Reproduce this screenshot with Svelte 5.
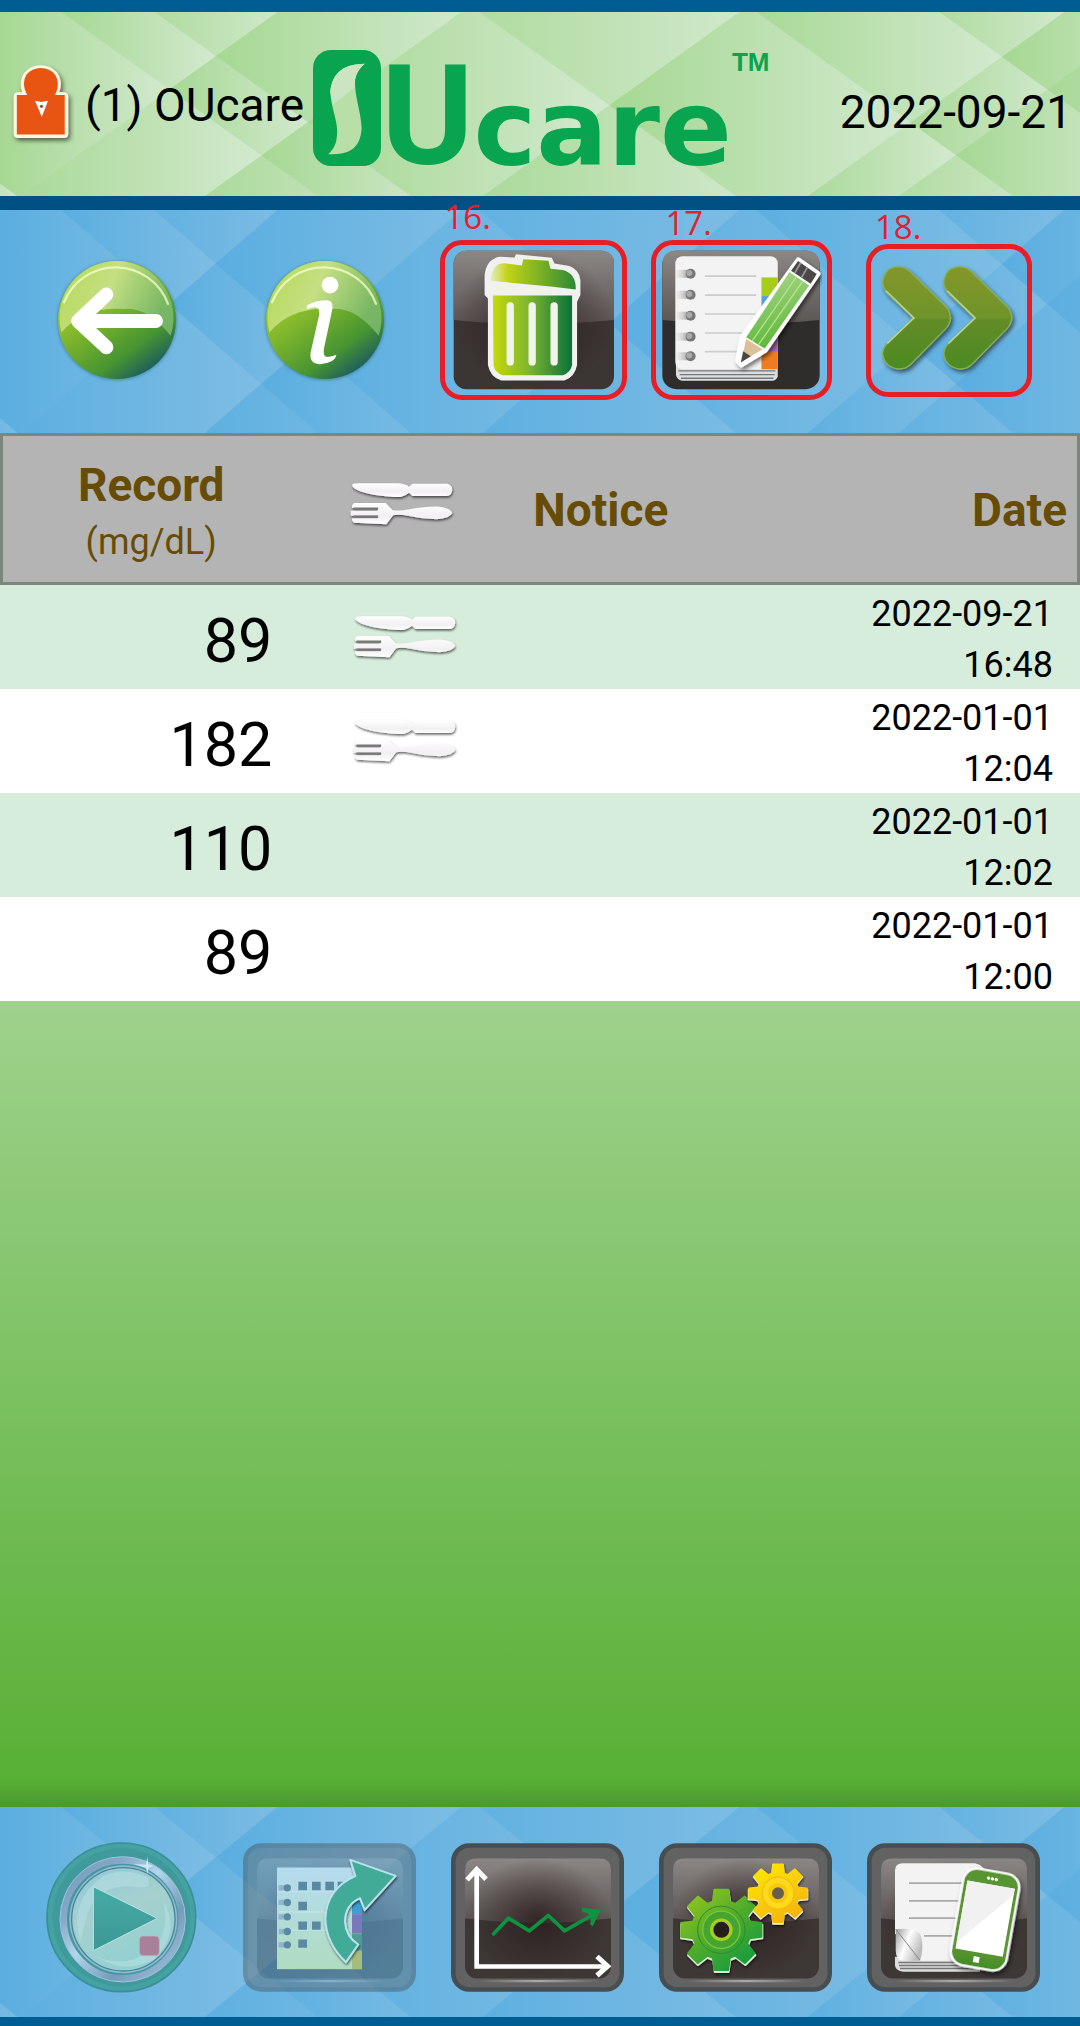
<script>
  const records = [
    { value: 89, meal: true, date: '2022-09-21', time: '16:48' },
    { value: 182, meal: true, date: '2022-01-01', time: '12:04' },
    { value: 110, meal: false, date: '2022-01-01', time: '12:02' },
    { value: 89, meal: false, date: '2022-01-01', time: '12:00' }
  ];

  // Argyle backdrop. Each facet lies between two falling lines (d1, d2) and
  // two rising lines (u1, u2), named by their x on the top edge; g1 and g2
  // are the ends of its shading.
  const slope = 2.7;
  const facets = [
    [-240, 62, -400, 278, 0, 170],
    [-240, 62, 278, 462, 0, 262],
    [-240, 62, 462, 900, 180, 420],
    [-600, -240, -200, 700, -60, 30],
    [62, 155, -200, 278, 62, 216],
    [62, 155, 278, 462, 170, 308],
    [62, 155, 462, 740, 262, 447],
    [155, 480, 0, 278, 120, 290],
    [155, 480, 278, 462, 216, 471],
    [155, 480, 462, 740, 308, 610],
    [155, 480, 740, 1065, 447, 772],
    [480, 757, 200, 740, 400, 760],
    [480, 757, 740, 1065, 610, 911],
    [480, 757, 1065, 1156, 790, 956],
    [480, 757, 1156, 1500, 850, 1060],
    [757, 940, 500, 1065, 740, 1002],
    [757, 940, 1065, 1156, 900, 1060],
    [757, 940, 1156, 1500, 956, 1150],
    [940, 1400, 700, 1065, 900, 1070],
    [940, 1400, 1065, 1156, 1002, 1200],
    [940, 1400, 1156, 1600, 1040, 1260]
  ];
  const corner = (d, u) => `${(u + d) / 2},${(u - d) / slope}`;
  const outline = ([d1, d2, u1, u2]) =>
    [corner(d1, u1), corner(d2, u1), corner(d2, u2), corner(d1, u2)].join(' ');

  function gear(cx, cy, outer, inner, teeth) {
    const pts = [];
    const step = (Math.PI * 2) / teeth;
    for (let i = 0; i < teeth; i++) {
      const a = i * step;
      for (const [r, o] of [[inner, -0.29], [outer, -0.17], [outer, 0.17], [inner, 0.29]]) {
        pts.push(`${cx + r * Math.cos(a + o)},${cy + r * Math.sin(a + o)}`);
      }
    }
    return pts.join(' ');
  }
</script>

{#snippet backdrop(id, dark, light)}
  <svg class="backdrop" viewBox="0 0 1080 190" preserveAspectRatio="none" aria-hidden="true">
    <defs>
      {#each facets as f, i}
        <linearGradient id="{id}{i}" gradientUnits="userSpaceOnUse" x1={f[4]} x2={f[5]} y1="0" y2="0">
          <stop offset="0" stop-color={dark} /><stop offset="1" stop-color={light} />
        </linearGradient>
      {/each}
    </defs>
    {#each facets as f, i}
      <polygon points={outline(f)} fill="url(#{id}{i})" stroke="url(#{id}{i})" stroke-width="1" />
    {/each}
  </svg>
{/snippet}

{#snippet cutlery()}
  <svg class="cutlery" viewBox="1012 150 312 144" preserveAspectRatio="none" role="img" aria-label="Meal">
    <g filter="url(#soft)" fill="url(#metal)">
      <path d="M1025 163Q1030 160 1045 160H1160Q1180 162 1190 170L1200 161H1300Q1316 163 1316 180Q1314 198 1298 198H1200L1190 188Q1172 203 1150 201Q1060 196 1030 175Q1022 168 1025 163Z" />
      <path d="M1030 219H1122L1142 240Q1160 244 1190 238Q1245 228 1280 230Q1314 235 1316 249Q1310 265 1270 268Q1230 268 1190 258Q1160 252 1144 256L1124 283L1030 278Q1022 274 1024 265H1098V257H1020V242H1098V234H1024Q1022 224 1030 219Z" />
      <path d="M1028 236H1100M1028 260H1100" stroke="#777" stroke-width="7" />
    </g>
  </svg>
{/snippet}

{#snippet tile(x)}
  <g transform="translate({x} 0)">
    <rect x="7" y="166" width="505" height="432" rx="48" fill="#626262" stroke="#474e51" stroke-width="14" />
    <rect x="42" y="204" width="438" height="361" rx="36" fill="#3d3736" />
    <path d="M42 384V240Q42 204 78 204H444Q480 204 480 240V384Q260 412 42 384Z" fill="url(#gloss)" />
    <rect x="42" y="204" width="438" height="361" rx="36" fill="url(#vignette)" />
    <path d="M80 573H444" stroke="url(#glint)" stroke-width="7" />
  </g>
{/snippet}

{#snippet ball(cx)}
  <circle {cx} cy="395" r="178" fill="#356b7c" opacity=".55" filter="url(#blur)" />
  <circle {cx} cy="393" r="176" fill="url(#ball)" />
  <path d="M{cx - 166} 430A170 170 0 1 1 {cx + 160} 440Q{cx + 90} 352 {cx + 20} 360Q{cx - 100} 352 {cx - 166} 430Z" fill="url(#shine)" />
  <path d="M{cx - 158} 340A166 166 0 0 1 {cx + 152} 345" fill="none" stroke="#f5ffc8" stroke-width="7" opacity=".75" stroke-linecap="round" />
{/snippet}

<svg class="defs" aria-hidden="true">
  <defs>
    <filter id="soft" x="-10%" y="-20%" width="125%" height="150%">
      <feDropShadow dx="2" dy="5" stdDeviation="3" flood-color="#000" flood-opacity=".6" />
    </filter>
    <filter id="drop" x="-20%" y="-20%" width="150%" height="150%">
      <feDropShadow dx="6" dy="8" stdDeviation="7" flood-color="#000" flood-opacity=".55" />
    </filter>
    <filter id="blur" x="-20%" y="-20%" width="140%" height="140%"><feGaussianBlur stdDeviation="5" /></filter>
    <linearGradient id="metal" x2="0" y2="1"><stop offset="0" stop-color="#fff" /><stop offset=".6" stop-color="#f2f0f2" /><stop offset="1" stop-color="#fff" /></linearGradient>
    <linearGradient id="gloss" x2="0" y2="1"><stop offset="0" stop-color="#8b8785" /><stop offset="1" stop-color="#5b5554" /></linearGradient>
    <radialGradient id="vignette"><stop offset="0" stop-color="#2a1c1b" stop-opacity=".8" /><stop offset="1" stop-color="#2a1c1b" stop-opacity="0" /></radialGradient>
    <linearGradient id="glint" gradientUnits="userSpaceOnUse" x1="80" x2="444"><stop offset="0" stop-color="#aaa" stop-opacity="0" /><stop offset=".5" stop-color="#aaa" /><stop offset="1" stop-color="#aaa" stop-opacity="0" /></linearGradient>
    <linearGradient id="ball" x1=".2" y1=".2" x2=".75" y2=".95"><stop offset="0" stop-color="#a4cd2c" /><stop offset=".35" stop-color="#7db52c" /><stop offset=".75" stop-color="#469432" /><stop offset="1" stop-color="#1d5f5c" /></linearGradient>
    <linearGradient id="shine" x2="1" y2=".3"><stop offset="0" stop-color="#b4d957" /><stop offset=".5" stop-color="#c5df82" /><stop offset="1" stop-color="#80bd72" stop-opacity=".8" /></linearGradient>
    <linearGradient id="leafy"><stop offset="0" stop-color="#c5d80c" /><stop offset=".45" stop-color="#7eb62f" /><stop offset="1" stop-color="#0a713b" /></linearGradient>
    <linearGradient id="lid"><stop offset="0" stop-color="#e6ecc0" /><stop offset=".2" stop-color="#c1d415" /><stop offset="1" stop-color="#2e8936" /></linearGradient>
    <linearGradient id="chev" x2="0" y2="1"><stop offset="0" stop-color="#84962c" /><stop offset=".5" stop-color="#6f942b" /><stop offset=".52" stop-color="#638c27" /><stop offset="1" stop-color="#4b8a23" /></linearGradient>
    <linearGradient id="wood" x1=".3" x2=".6" y2="1"><stop offset="0" stop-color="#a9d68a" /><stop offset="1" stop-color="#57b533" /></linearGradient>
    <linearGradient id="coil"><stop offset="0" stop-color="#ddd" stop-opacity=".3" /><stop offset="1" stop-color="#888" /></linearGradient>
    <linearGradient id="gearG" x2=".8" y2="1"><stop offset="0" stop-color="#9bcb1d" /><stop offset=".5" stop-color="#53ad2b" /><stop offset="1" stop-color="#139a3d" /></linearGradient>
    <linearGradient id="gearY" x2=".6" y2="1"><stop offset="0" stop-color="#ffec00" /><stop offset="1" stop-color="#f5b50f" /></linearGradient>
    <linearGradient id="silver" x2="1" y2="1"><stop offset="0" stop-color="#7199bb" /><stop offset=".25" stop-color="#88a8c8" /><stop offset=".45" stop-color="#b2d6ec" /><stop offset=".7" stop-color="#789bbb" /><stop offset="1" stop-color="#a7c6e0" /></linearGradient>
    <linearGradient id="glass" x2=".4" y2="1"><stop offset="0" stop-color="#8fc8dc" /><stop offset=".5" stop-color="#a5d0ce" /><stop offset="1" stop-color="#93d0d1" /></linearGradient>
    <linearGradient id="play" x2="0" y2="1"><stop offset="0" stop-color="#46aba5" /><stop offset="1" stop-color="#3c9794" /></linearGradient>
    <linearGradient id="sheet" x2="0" y2="1"><stop offset="0" stop-color="#b5dbf0" /><stop offset="1" stop-color="#afdcc0" /></linearGradient>
    <linearGradient id="curl" y2=".5"><stop offset="0" stop-color="#999" /><stop offset=".5" stop-color="#fff" /><stop offset="1" stop-color="#bbb" /></linearGradient>
    <linearGradient id="phone" x2="0" y2="1"><stop offset="0" stop-color="#55952f" /><stop offset=".8" stop-color="#62953a" /><stop offset="1" stop-color="#3f8e1e" /></linearGradient>
  </defs>
</svg>

<div class="app">
  <header class="banner">
    {@render backdrop('g', '#a6d893', '#d2e9ce')}
    <svg class="lock" viewBox="30 182 190 250" preserveAspectRatio="none" role="img" aria-label="Locked">
      <g filter="url(#drop)">
        <path d="M52 272H66Q54 240 72 214Q92 192 120 192Q148 192 168 214Q186 240 174 272H188Q200 274 200 284V396Q200 408 188 408H54Q41 408 41 396V284Q41 274 52 272Z" fill="#fff6e4" />
      </g>
      <path d="M50 280H80Q62 246 78 220Q94 200 120 200Q146 200 162 220Q178 246 162 280H190V398H50Z" fill="#e85512" />
      <path d="M103 297L122 301L141 297L123 346Z" fill="#fff" /><circle cx="122" cy="314" r="5" fill="#8d5a3d" />
    </svg>
    <span class="user">(1) OUcare</span>
    <div class="logo">
      <span class="mark">O<svg viewBox="909 150 197 347" preserveAspectRatio="none" aria-hidden="true"><path d="M1059 191C1000 192 965 215 959 275C962 330 985 370 978 410C975 440 963 450 953 462C1010 463 1045 450 1050 385C1048 330 1028 290 1031 235C1036 210 1048 200 1059 191Z" fill="#b9dfa8" /><path d="M1059 191C1000 192 965 215 959 275L968 312L1029 262C1028 225 1045 204 1059 191Z" fill="#cbe5c2" /></svg></span><span class="tall">U</span><span class="low">care</span><sup>TM</sup>
    </div>
    <time class="today">2022-09-21</time>
  </header>

  <nav class="bar tools" aria-label="Record tools">
    {@render backdrop('t', '#5aaee0', '#7ebde4')}
    <button aria-label="Back">
      <svg class="round" viewBox="165 208 370 370">
        {@render ball(350)}
        <path d="M318 317L234 396L318 474M240 396H466" fill="none" stroke="#fff" stroke-width="42" stroke-linecap="round" stroke-linejoin="round" />
      </svg>
    </button>
    <button aria-label="Information">
      <svg class="round" viewBox="789 208 370 370">
        {@render ball(974)}
        <circle cx="989" cy="289" r="25" fill="#fff" />
        <path d="M920 350Q945 334 980 334Q1000 336 996 360L971 478Q966 505 985 503Q998 502 1008 497Q1005 520 960 525Q926 524 931 490L957 376Q958 350 938 356L920 360Z" fill="#fff" />
      </svg>
    </button>
    <div class="marked first">
      <span class="number">16.</span>
      <button aria-label="Delete">
        <svg class="dark" viewBox="65 180 484 420">
          <rect x="67" y="182" width="482" height="416" rx="38" fill="#3b3534" />
          <path d="M67 390V222Q67 182 107 182H509Q549 182 549 222V390Q300 415 67 390Z" fill="url(#gloss)" />
          <rect x="67" y="182" width="482" height="416" rx="38" fill="url(#vignette)" />
          <path d="M160 300V255Q165 208 205 200L250 202L254 192L362 203L370 220L415 228Q446 240 448 270V315L438 335V525Q432 560 400 572H210Q176 560 170 525V325L160 315Z" fill="#f1f1ef" />
          <path d="M178 272Q182 215 225 220L272 226L276 207L352 212L358 236L395 240Q435 250 434 298L365 290Z" fill="url(#lid)" />
          <path d="M185 316H423V525Q418 548 395 556H215Q190 548 187 525Z" fill="url(#leafy)" />
          <path d="M237 348V516M303 348V516M369 348V516" stroke="#f1f5ea" stroke-width="22" stroke-linecap="round" />
        </svg>
      </button>
    </div>
    <div class="marked second">
      <span class="number">17.</span>
      <button aria-label="Edit note">
        <svg class="dark" viewBox="60 180 484 420">
          <rect x="64" y="182" width="473" height="416" rx="42" fill="#2f2c2c" />
          <path d="M64 390V224Q64 182 106 182H495Q537 182 537 224V390Q300 415 64 390Z" fill="url(#gloss)" />
          <path d="M105 520H411V560Q405 573 395 573H125Q108 570 105 555Z" fill="#ddd" />
          <path d="M112 543H404M116 554H402M120 565H398" stroke="#73787a" stroke-width="4" />
          <rect x="103" y="198" width="308" height="340" rx="22" fill="#f3f3f3" />
          <rect x="362" y="262" width="49" height="56" fill="#a8cc1c" /><rect x="362" y="318" width="49" height="56" fill="#5aa2d4" />
          <rect x="362" y="430" width="49" height="56" fill="#a06ab0" /><rect x="362" y="484" width="49" height="54" fill="#ee7d22" />
          <path d="M192 258H346M192 315H346M192 372H346M192 429H346M192 485H346" stroke="#ccc" stroke-width="5" />
          {#each [251, 314, 377, 440, 499] as y}
            <rect x="106" y={y - 12} width="44" height="24" fill="url(#coil)" /><circle cx="149" cy={y} r="15" fill="#777" /><circle cx="145" cy={y - 2} r="9" fill="#aaa" />
          {/each}
          <path d="M473 211L530 251L372 480L302 523L292 511L305 443Z" fill="#fff" stroke="#fff" stroke-width="18" stroke-linejoin="round" filter="url(#drop)" />
          <path d="M472 213L528 252L510 281L451 242Z" fill="#4d4848" /><path d="M480 218L462 249M500 232L482 263" stroke="#999" stroke-width="5" />
          <path d="M446 246L505 286L372 476L316 442Z" fill="url(#wood)" /><path d="M466 262L335 452M485 275L353 464" stroke="#b7e38c" stroke-width="4" />
          <path d="M316 447L366 478L302 515Z" fill="#dcc09a" /><path d="M307 484L330 499L300 518Z" fill="#4c4542" />
        </svg>
      </button>
    </div>
    <div class="marked third">
      <span class="number">18.</span>
      <button aria-label="Next">
        <svg class="next" viewBox="714 208 430 360">
          {#each [0, 184] as x}
            <path transform="translate({x} 0)" d="M742 308Q728 290 728 272Q735 228 775 228Q795 228 810 242L918 348Q946 382 918 414L812 522Q795 537 772 535Q730 525 728 487Q730 470 745 455L820 382Z" fill="url(#chev)" stroke="#86b04e" stroke-width="4" filter="url(#drop)" />
            <path transform="translate({x} 0)" d="M738 300L822 382L742 458" fill="none" stroke="#c5dda4" stroke-width="5" opacity=".8" />
          {/each}
        </svg>
      </button>
    </div>
  </nav>

  <main>
    <table>
      <thead>
        <tr>
          <th class="record"><span class="label">Record</span><span class="unit">(mg/dL)</span></th>
          <th class="meal">{@render cutlery()}</th>
          <th class="notice">Notice</th>
          <th class="date">Date</th>
        </tr>
      </thead>
      <tbody>
        {#each records as r}
          <tr>
            <td class="value">{r.value}</td>
            <td class="meal">{#if r.meal}{@render cutlery()}{/if}</td>
            <td></td>
            <td class="when"><span class="day">{r.date}</span><span class="hour">{r.time}</span></td>
          </tr>
        {/each}
      </tbody>
    </table>
  </main>

  <footer class="bar actions">
    {@render backdrop('f', '#5aaee0', '#7ebde4')}
    <button aria-label="Start measuring" disabled>
      <svg class="play" viewBox="138 156 453 453">
        <circle cx="364" cy="382" r="223" fill="#44a2a3" stroke="#398f93" stroke-width="5" />
        <circle cx="364" cy="382" r="207" fill="#409a9c" />
        <circle cx="368" cy="388" r="177" fill="none" stroke="url(#silver)" stroke-width="20" />
        <circle cx="368" cy="388" r="188" fill="none" stroke="#9dc6e2" stroke-width="3" />
        <circle cx="370" cy="388" r="162" fill="#8fb9d5" />
        <circle cx="370" cy="388" r="155" fill="url(#glass)" stroke="#498594" stroke-width="4" />
        <path d="M240 455Q205 330 310 258Q365 230 440 260Q465 300 400 290Q300 280 262 370Q245 440 240 455ZM290 500Q400 545 480 450Q505 400 490 330Q545 430 460 510Q370 555 290 500Z" fill="#b4dde1" opacity=".65" />
        <path d="M280 290L472 385L280 482Z" fill="url(#play)" stroke="#bfe2e5" stroke-width="3" />
        <rect x="418" y="438" width="60" height="59" rx="12" fill="#a97f99" stroke="#b8bcc5" stroke-width="2" />
        <path d="M442 200L445 223L460 228L446 233L442 252L438 233L400 222L438 224Z" fill="#cce7f5" />
      </svg>
    </button>
    <button class="off" aria-label="Export records" disabled>
      <svg class="tile" viewBox="729 159 519 446">
        <g opacity=".42">{@render tile(729)}</g>
        <rect x="831" y="232" width="255" height="305" fill="url(#sheet)" />
        <path d="M1056 330H1086V372H1056Z" fill="#3c9fd2" /><path d="M1056 372H1086V430H1056Z" fill="#7a78ba" /><path d="M1056 430H1086V482H1056Z" fill="#4d9e92" /><path d="M1056 482H1086V537H1056Z" fill="#a5bd7c" />
        <path d="M835 305H1050M835 365H1050M835 420H1050" stroke="#c6e2ed" stroke-width="3" />
        <g fill="#5a89a2">
          <path d="M895 275h26v25h-26zM936 275h26v25h-26zM976 275h26v25h-26zM1013 275h20v25h-20zM895 335h26v25h-26zM895 394h26v25h-26zM936 394h26v25h-26zM895 448h26v25h-26z" />
          {#each [293, 337, 380, 424, 464] as y}
            <rect x="836" y={y - 8} width="24" height="16" fill="#90b4cf" /><circle cx="862" cy={y} r="11" />
          {/each}
        </g>
        <path d="M1051 209L1187 257L1094 360L1080 324Q1035 345 1035 395Q1038 440 1075 463L1038 516Q978 460 976 385Q980 295 1066 258Z" fill="#43ab97" stroke="#b9e3ef" stroke-width="6" stroke-linejoin="round" filter="url(#soft)" />
      </svg>
    </button>
    <button aria-label="Trend chart">
      <svg class="tile" viewBox="63 159 519 446">
        {@render tile(63)}
        <path d="M140 240V529H530" fill="none" stroke="#fff" stroke-width="14" />
        <path d="M111 269L140 238L168 267M501 499L533 528L501 556" fill="none" stroke="#fff" stroke-width="15" />
        <path d="M191 431L235 384L298 422L355 376L404 422L495 370" fill="none" stroke="#0d9440" stroke-width="11" stroke-linecap="round" stroke-linejoin="round" />
        <path d="M455 353L512 359L488 409L480 402L484 382L474 370L456 364Z" fill="#0d9440" />
      </svg>
    </button>
    <button aria-label="Settings">
      <svg class="tile" viewBox="688 159 519 446">
        {@render tile(688)}
        <g filter="url(#soft)">
          <polygon points={gear(876, 424, 124, 90, 8)} fill="#d7e9d2" stroke="#d7e9d2" stroke-width="5" stroke-linejoin="round" />
          <polygon points={gear(875, 419, 122, 88, 8)} fill="url(#gearG)" stroke="url(#gearG)" stroke-width="6" stroke-linejoin="round" />
        </g>
        <circle cx="875" cy="419" r="71" fill="none" stroke="#2f8a2c" stroke-width="3" /><circle cx="875" cy="419" r="56" fill="#45a52e" stroke="#7cc53b" stroke-width="4" />
        <circle cx="875" cy="419" r="29" fill="#251e1c" stroke="#a6d01c" stroke-width="10" />
        <g filter="url(#soft)">
          <polygon points={gear(1045, 313, 90, 63, 8)} fill="#f2edd0" stroke="#f2edd0" stroke-width="4" stroke-linejoin="round" />
          <polygon points={gear(1045, 309, 88, 62, 8)} fill="url(#gearY)" stroke="url(#gearY)" stroke-width="5" stroke-linejoin="round" />
        </g>
        <circle cx="1045" cy="309" r="48" fill="#ffd91a" stroke="#f0bd18" stroke-width="4" /><circle cx="1045" cy="309" r="30" fill="#f8c80c" />
        <circle cx="1045" cy="309" r="18" fill="#6b5d4e" />
      </svg>
    </button>
    <button aria-label="Mobile report">
      <svg class="tile" viewBox="81 159 519 446">
        {@render tile(81)}
        <path d="M165 500H420V545H190Q166 540 165 525Z" fill="#ddd" /><path d="M175 517H400M177 526H400M180 535H400" stroke="#777" stroke-width="4" />
        <path d="M165 240Q166 219 188 219H405Q435 224 440 260V512H240L165 430Z" fill="#f3f3f3" />
        <path d="M207 279H370M207 332H370M207 384H370M252 437H370" stroke="#aaa" stroke-width="5" />
        <path d="M167 417Q235 410 244 440Q252 480 240 512H190Q168 512 167 480Z" fill="url(#curl)" /><path d="M167 417L240 510" stroke="#888" stroke-width="3" />
        <g transform="rotate(10 435 388)">
          <rect x="350" y="241" width="170" height="294" rx="42" fill="url(#phone)" stroke="#fff" stroke-width="7" filter="url(#drop)" />
          <rect x="363" y="282" width="144" height="207" fill="#fff" /><path d="M363 282H507V300L363 470Z" fill="#f1f1f1" />
          <circle cx="424" cy="264" r="5" fill="#fff" /><circle cx="436" cy="264" r="5" fill="#fff" /><circle cx="448" cy="264" r="5" fill="#fff" />
          <rect x="421" y="502" width="18" height="18" fill="#fff" />
        </g>
      </svg>
    </button>
  </footer>
</div>

<style>
  :global(body) { margin: 0; }
  .app {
    display: flex;
    flex-direction: column;
    min-height: 100vh;
    font-family: Roboto, "Liberation Sans", sans-serif;
    color: #000;
  }
  .defs { position: absolute; width: 0; height: 0; }
  .backdrop { position: absolute; inset: 0; width: 100%; height: 100%; z-index: -1; }
  .banner {
    position: relative;
    isolation: isolate;
    display: flex;
    align-items: center;
    box-sizing: border-box;
    min-height: 210px;
    padding: 0 8px 0 10px;
    border-top: 12px solid #005d94;
    border-bottom: 14px solid #005083;
    font-size: 46px;
    white-space: nowrap;
  }
  .lock { width: 65px; height: 84px; flex: none; margin-right: 10px; }
  .user { padding-top: 2px; }
  .logo {
    display: flex;
    align-items: flex-end;
    height: 116px;
    margin-left: 9px;
    padding-top: 8px;
    color: #09a44f;
    font-weight: 700;
  }
  .mark {
    position: relative;
    display: block;
    width: 68px;
    height: 116px;
    border-radius: 18px;
    background: #09a44f;
    font-size: 80px;
    line-height: 116px;
    text-align: center;
    overflow: hidden;
  }
  .mark svg { position: absolute; inset: 0; width: 100%; height: 100%; }
  .tall {
    font-family: "Liberation Sans Narrow", Roboto, sans-serif;
    font-size: 140px;
    line-height: 100px;
  }
  .low {
    font-family: "DejaVu Sans", sans-serif;
    font-size: 106px;
    line-height: 74px;
  }
  sup { align-self: flex-start; font-family: "Liberation Sans", sans-serif; font-size: 26px; line-height: 24px; }
  .today { margin-left: auto; padding-top: 16px; }

  .bar {
    position: relative;
    isolation: isolate;
    display: grid;
    grid-template-columns: repeat(5, 1fr);
    place-items: center;
    box-sizing: border-box;
  }
  .tools { min-height: 223px; padding: 0 27px 3px 13px; }
  .actions { min-height: 219px; padding: 11px 23px 0 17px; border-bottom: 9px solid #005d94; }
  button { display: block; padding: 0; border: 0; background: none; }
  button svg { display: block; }
  .round { width: 124px; height: 124px; }
  .dark { width: 161px; height: 140px; }
  .next { width: 143px; height: 120px; }
  .play { width: 151px; height: 151px; }
  .tile { width: 173px; height: 149px; }
  .marked {
    position: relative;
    display: grid;
    place-items: center;
    box-sizing: border-box;
    height: 160px;
    border: 5px solid #e81e27;
    border-radius: 22px;
  }
  .first { width: 187px; }
  .second { width: 181px; }
  .third { width: 166px; height: 153px; }
  .number {
    position: absolute;
    left: 0;
    bottom: 100%;
    padding-bottom: 4px;
    font-family: "Open Sans", "Noto Sans", sans-serif;
    font-size: 33px;
    line-height: 36px;
    color: #e0222e;
  }
  .first .number { padding-bottom: 10px; }
  .second .number { left: 10px; }
  .third .number { left: 4px; }

  main { flex: 1; background: linear-gradient(#9fd28d 41%, #58b035 98%, #4a982f); }
  table { width: 100%; table-layout: fixed; border-collapse: separate; border-spacing: 0; }
  th {
    box-sizing: border-box;
    height: 152px;
    padding: 0;
    border: 0 solid #7b867c;
    border-width: 3px 0;
    background: #b4b4b4;
    color: #664c05;
    font-size: 46px;
    font-weight: 700;
  }
  th:first-child { border-left-width: 3px; }
  th:last-child { border-right-width: 3px; }
  .record { width: 28%; padding: 8px 3px 0 0; }
  .record span { display: block; }
  .label { line-height: 58px; }
  .unit { font-size: 36px; font-weight: 400; line-height: 56px; }
  th.meal { width: 19%; padding: 0 6px 10px 0; }
  .notice { width: 18%; padding: 2px 8px 0 0; }
  .date { padding: 2px 10px 0 0; text-align: right; }
  td { box-sizing: border-box; height: 104px; padding: 0; background: #fff; }
  tr:nth-child(odd) td { background: #d7eddc; }
  .value { padding: 13px 30px 0 0; font-size: 61px; line-height: 86px; text-align: right; vertical-align: top; }
  .meal { text-align: center; }
  .cutlery { display: block; width: 107px; height: 48px; margin: 0 auto; }
  .when { padding-right: 27px; font-size: 36px; text-align: right; vertical-align: top; }
  .when span { display: block; }
  .day { line-height: 58px; }
  .hour { line-height: 44px; }
</style>
